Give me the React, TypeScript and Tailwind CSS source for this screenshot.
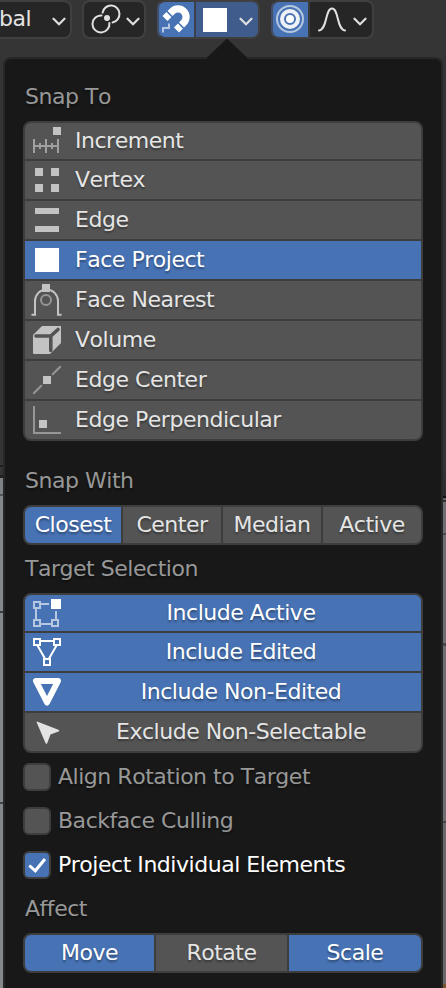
import type { ReactNode } from "react";

const shadow = "[text-shadow:0_2px_2px_rgba(0,0,0,0.35)]";

function Icon({ children }: { children: ReactNode }) {
  return (
    <svg width="32" height="32" viewBox="0 0 32 32" fill="none" className="block shrink-0">
      {children}
    </svg>
  );
}

function Chevron() {
  return (
    <svg width="14" height="9" viewBox="0 0 14 9" fill="none" className="shrink-0">
      <path d="M1.500 1.700 7 7.200l5.500-5.500" stroke="#dedede" strokeWidth="2.200" strokeLinecap="round" />
    </svg>
  );
}

const icons: Record<string, ReactNode> = {
  Increment: (
    <>
      <rect x="22" y="2" width="8" height="8" fill="#c3c3c3" />
      <path d="M3 14v14M15 14v14M27 14v14M3 21h24M9 18v6M21 18v6" stroke="#a0a0a0" strokeWidth="2" />
    </>
  ),
  Vertex: <path d="M4 4h8v8H4zM20 4h8v8h-8zM4 20h8v8H4zM20 20h8v8h-8z" fill="#c3c3c3" />,
  Edge: <path d="M4 4h24v6H4zM4 22h24v6H4z" fill="#c3c3c3" />,
  "Face Project": <path d="M4 4h24v24H4z" fill="#fff" />,
  "Face Nearest": (
    <>
      <path d="M.5 30.700H4V17a11.500 11.500 0 0 1 23 0v13.700h3.500" stroke="#c3c3c3" strokeWidth="2" />
      <rect x="11" y="0" width="8" height="8" fill="#c3c3c3" />
      <circle cx="15" cy="16" r="5" stroke="#969696" strokeWidth="2" />
    </>
  ),
  Volume: (
    <>
      <path d="M11 2h19v17L19 30H3a1 1 0 0 1-1-1V11z" fill="#c3c3c3" />
      <path d="M5 12h14.800L27 5.500M19.800 12v14.500" stroke="#535353" strokeWidth="3.600" strokeLinecap="round" strokeLinejoin="round" />
    </>
  ),
  "Edge Center": (
    <>
      <path d="m2.800 29.200 7.500-7.500M21.700 10.300l7.500-7.500" stroke="#969696" strokeWidth="2" strokeLinecap="round" />
      <rect x="12" y="12" width="8" height="8" fill="#c3c3c3" />
    </>
  ),
  "Edge Perpendicular": (
    <>
      <path d="M3 2v27h27" stroke="#969696" strokeWidth="2" />
      <rect x="8" y="16" width="8" height="8" fill="#c3c3c3" />
    </>
  ),
  "Include Active": (
    <>
      <path
        d="M3 5h6v6H3zM3 23h6v6H3zM21 23h6v6h-6zM9 7h9M5 11v12M9 27h12M25 14v8"
        stroke="#b5c7e1"
        strokeWidth="2"
      />
      <rect x="20" y="2" width="10" height="10" fill="#fff" />
    </>
  ),
  "Include Edited": (
    <path
      d="M3 3h6v6H3zM23 3h6v6h-6zM13 23h6v6h-6zM9 5h14M6.500 9.500l8 14M25.500 9.500l-8 14"
      stroke="#fff"
      strokeWidth="2"
    />
  ),
  "Include Non-Edited": (
    <path d="M5 5h22L16 26.500z" stroke="#fff" strokeWidth="6" strokeLinejoin="round" />
  ),
  "Exclude Non-Selectable": (
    <path d="M6 5.500 28 14l.2 1.300-8.700 3.200L16 27.800l-1.300-.2L5.500 6z" fill="#e3e3e3" />
  ),
};

const snapTo = [
  "Increment",
  "Vertex",
  "Edge",
  "Face Project",
  "Face Nearest",
  "Volume",
  "Edge Center",
  "Edge Perpendicular",
];

const targets = ["Include Active", "Include Edited", "Include Non-Edited", "Exclude Non-Selectable"];

function Label({ children }: { children: ReactNode }) {
  return <div className="h-10 pl-0.5 leading-10 text-[#989898]">{children}</div>;
}

function List({ items, selected, centered }: { items: string[]; selected: string[]; centered?: boolean }) {
  return (
    <div className="flex flex-col gap-0.5 overflow-hidden rounded-[8px] border-2 border-[#3d3d3d] bg-[#3d3d3d]">
      {items.map((name) => {
        const on = selected.includes(name);
        return (
          <div
            key={name}
            className={`flex h-[38px] items-center pl-1.5 first:h-9 ${on ? "bg-[#4772b3] text-white" : "bg-[#545454] text-[#e5e5e5]"}`}
          >
            <Icon>{icons[name]}</Icon>
            <span className={centered ? "grow pr-0.5 pb-0.5 text-center" : "pb-0.5 pl-3"}>{name}</span>
          </div>
        );
      })}
    </div>
  );
}

function Segments({ items, selected, cols }: { items: string[]; selected: string[]; cols: string }) {
  return (
    <div className={`grid h-10 gap-0.5 overflow-hidden rounded-[8px] border-2 border-[#3d3d3d] bg-[#3d3d3d] ${cols}`}>
      {items.map((name) => (
        <div
          key={name}
          className={`text-center leading-9 ${selected.includes(name) ? "bg-[#4772b3] text-white" : "bg-[#545454] text-[#e5e5e5]"}`}
        >
          {name}
        </div>
      ))}
    </div>
  );
}

function Check({ label, on }: { label: string; on?: boolean }) {
  return (
    <div className="flex h-7 items-center gap-[7px]">
      <div
        className={`flex size-7 items-center justify-center rounded-[6px] border-2 border-[#3d3d3d] ${on ? "bg-[#4772b3]" : "bg-[#545454]"}`}
      >
        {on && (
          <svg width="20" height="20" viewBox="0 0 20 20" fill="none">
            <path d="m2.300 10.500 6 5.300L18 4" stroke="#fff" strokeWidth="3" />
          </svg>
        )}
      </div>
      <span className={`pb-0.5 ${on ? "text-white" : "text-[#989898]"}`}>{label}</span>
    </div>
  );
}

function Toolbar() {
  return (
    <div className="flex h-[57px] shrink-0 items-start bg-[#353535]">
      <div className="flex h-[39px] w-[72px] items-center justify-between rounded-r-[8px] border-2 border-l-0 border-[#404040] bg-[#262626] pr-1 text-[#e3e3e3]">
        <span className="-ml-px pb-0.5">bal</span>
        <div className="pt-1">
          <Chevron />
        </div>
      </div>
      <div className="ml-[10px] flex h-[39px] w-16 items-center rounded-[8px] border-2 border-[#404040] bg-[#262626]">
        <svg width="42" height="35" viewBox="84 2 42 35" fill="none" className="shrink-0">
          <circle cx="107" cy="18" r="3" fill="#e0e0e0" />
          <path d="M102.600 12.600A8.500 8.500 0 1 1 112.500 22.400" stroke="#e0e0e0" strokeWidth="2" strokeLinecap="round" />
          <path d="M101.500 15.500A8.500 8.500 0 1 0 109.400 23" stroke="#e0e0e0" strokeWidth="2" strokeLinecap="round" />
        </svg>
        <div className="pt-1">
          <Chevron />
        </div>
      </div>
      <div className="ml-[11px] flex h-[39px] w-[103px] gap-0.5 overflow-hidden rounded-[8px] border-2 border-[#404040] border-l-[#414e65] bg-[#3b414c]">
        <div className="w-[35px] shrink-0 bg-[#4772b3]">
          <svg width="35" height="35" viewBox="159 2 35 35" fill="none">
            <path d="M165 18.500l7.300-7.200a8 8 0 0 1 11.400 11.400L176.500 30" stroke="#fff" strokeWidth="7.200" />
            <path d="m166 10.500 7 7M177.500 22l7 7" stroke="#4772b3" strokeWidth="1.700" />
            <path d="M163 32.500V28h6v-4.500" stroke="#b5c7e1" strokeWidth="2" />
          </svg>
        </div>
        <div className="flex grow items-center bg-[#405c8c] pl-[7px]">
          <div className="size-6 bg-white" />
          <div className="pt-1 pl-3">
            <Chevron />
          </div>
        </div>
      </div>
      <div className="ml-[11px] flex h-[39px] w-[103px] gap-0.5 overflow-hidden rounded-[8px] border-2 border-[#404040] border-l-[#414e65] bg-[#3b3b3b]">
        <div className="w-[35px] shrink-0 bg-[#4772b3]">
          <svg width="35" height="35" viewBox="273 2 35 35" fill="none">
            <circle cx="290" cy="19" r="13" stroke="#b5c7e1" strokeWidth="2" />
            <circle cx="290" cy="19" r="8" stroke="#eef2f8" strokeWidth="4" />
            <circle cx="290" cy="19" r="4" fill="#fff" />
          </svg>
        </div>
        <div className="flex grow items-center bg-[#262626]">
          <svg width="43" height="35" viewBox="310 2 43 35" fill="none" className="shrink-0">
            <path
              d="M319 30.500c8.500-1 6-22 13-22s4.500 21 13 22"
              stroke="#e0e0e0"
              strokeWidth="2"
              strokeLinecap="round"
            />
          </svg>
          <div className="pt-1">
            <Chevron />
          </div>
        </div>
      </div>
    </div>
  );
}

export default function App() {
  return (
    <div className="relative flex h-[988px] w-[446px] flex-col overflow-hidden bg-[#353535] font-['DejaVu_Sans',sans-serif] text-[22px] tracking-[-0.47px] [font-kerning:none]">
      <Toolbar />
      <div className="flex grow">
        <div className="w-[3px] shrink-0 bg-[linear-gradient(#343434_408px,#202020_408px_410px,#343434_410px_418px,#202020_418px_421px,#808386_421px_437px,#54565a_437px_439px,#85888a_439px_554px,#3c3d3f_554px_556px,#85888a_556px_745px,#444_745px_747px,#85888a_747px)]" />
        <div className={`flex grow flex-col rounded-t-[8px] border-2 border-b-0 border-[#272727] bg-[#181818] px-[18px] pt-[18px] ${shadow}`}>
          <Label>Snap To</Label>
          <div className="mt-1">
            <List items={snapTo} selected={["Face Project"]} />
          </div>
          <div className="mt-5">
            <Label>Snap With</Label>
          </div>
          <div className="mt-1">
            <Segments items={["Closest", "Center", "Median", "Active"]} selected={["Closest"]} cols="grid-cols-[96px_98px_98px_98px]" />
          </div>
          <div className="mt-1">
            <Label>Target Selection</Label>
          </div>
          <div className="mt-1">
            <List items={targets} selected={targets.slice(0, 3)} centered />
          </div>
          <div className="mt-2.5 flex flex-col gap-4">
            <Check label="Align Rotation to Target" />
            <Check label="Backface Culling" />
            <Check label="Project Individual Elements" on />
          </div>
          <div className="mt-2.5">
            <Label>Affect</Label>
          </div>
          <div className="mt-1">
            <Segments items={["Move", "Rotate", "Scale"]} selected={["Move", "Scale"]} cols="grid-cols-[129px_131px_132px]" />
          </div>
        </div>
        <div className="w-[3px] shrink-0 bg-[linear-gradient(#333_408px,#2c2c2c_439px,#111_439px_441px,#606064_441px_443px,#333_443px_445px,#6f6e72_445px_476px,#48484c_476px_478px,#6f6e72_478px_586px,#48484c_586px_589px,#6f6e72_589px_764px,#444_764px_766px,#68686a_766px_926px,#7a5230_928px)]" />
      </div>
      <svg width="44" height="22" viewBox="0 0 44 22" className="absolute top-[38px] left-[205px]">
        <path d="M2 19.500 22 .5l20 19V22H2z" fill="#181818" />
      </svg>
    </div>
  );
}
